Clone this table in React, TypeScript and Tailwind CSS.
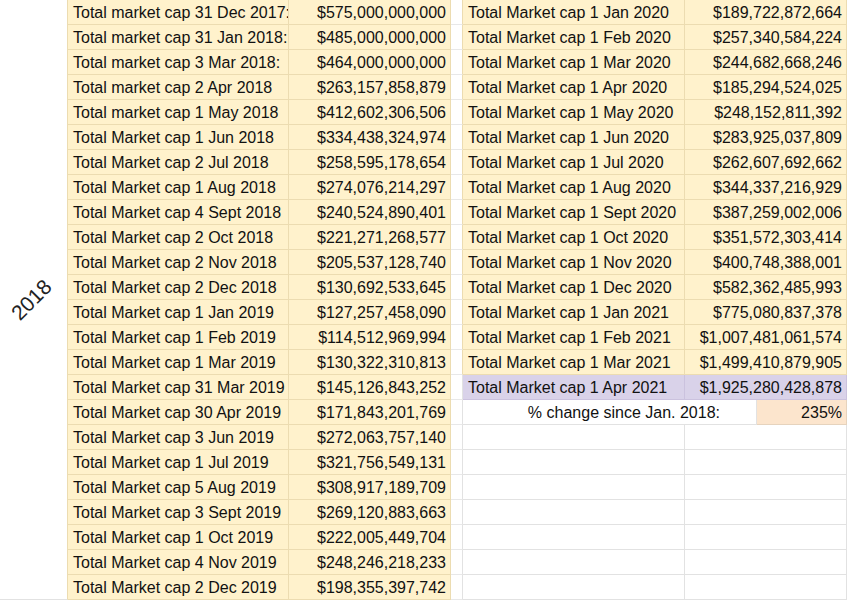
import clsx from "clsx";

const left: [string, string][] = [
  ["Total market cap 31 Dec 2017:", "$575,000,000,000"],
  ["Total market cap 31 Jan 2018:", "$485,000,000,000"],
  ["Total market cap 3 Mar 2018:", "$464,000,000,000"],
  ["Total market cap 2 Apr 2018", "$263,157,858,879"],
  ["Total market cap 1 May 2018", "$412,602,306,506"],
  ["Total Market cap 1 Jun 2018", "$334,438,324,974"],
  ["Total Market cap 2 Jul 2018", "$258,595,178,654"],
  ["Total Market cap 1 Aug 2018", "$274,076,214,297"],
  ["Total Market cap 4 Sept 2018", "$240,524,890,401"],
  ["Total Market cap 2 Oct 2018", "$221,271,268,577"],
  ["Total Market cap 2 Nov 2018", "$205,537,128,740"],
  ["Total Market cap 2 Dec 2018", "$130,692,533,645"],
  ["Total Market cap 1 Jan 2019", "$127,257,458,090"],
  ["Total Market cap 1 Feb 2019", "$114,512,969,994"],
  ["Total Market cap 1 Mar 2019", "$130,322,310,813"],
  ["Total Market cap 31 Mar 2019", "$145,126,843,252"],
  ["Total Market cap 30 Apr 2019", "$171,843,201,769"],
  ["Total Market cap 3 Jun 2019", "$272,063,757,140"],
  ["Total Market cap 1 Jul 2019", "$321,756,549,131"],
  ["Total Market cap 5 Aug 2019", "$308,917,189,709"],
  ["Total Market cap 3 Sept 2019", "$269,120,883,663"],
  ["Total Market cap 1 Oct 2019", "$222,005,449,704"],
  ["Total Market cap 4 Nov 2019", "$248,246,218,233"],
  ["Total Market cap 2 Dec 2019", "$198,355,397,742"],
];

const right: [string, string][] = [
  ["Total Market cap 1 Jan 2020", "$189,722,872,664"],
  ["Total Market cap 1 Feb 2020", "$257,340,584,224"],
  ["Total Market cap 1 Mar 2020", "$244,682,668,246"],
  ["Total Market cap 1 Apr 2020", "$185,294,524,025"],
  ["Total Market cap 1 May 2020", "$248,152,811,392"],
  ["Total Market cap 1 Jun 2020", "$283,925,037,809"],
  ["Total Market cap 1 Jul 2020", "$262,607,692,662"],
  ["Total Market cap 1 Aug 2020", "$344,337,216,929"],
  ["Total Market cap 1 Sept 2020", "$387,259,002,006"],
  ["Total Market cap 1 Oct 2020", "$351,572,303,414"],
  ["Total Market cap 1 Nov 2020", "$400,748,388,001"],
  ["Total Market cap 1 Dec 2020", "$582,362,485,993"],
  ["Total Market cap 1 Jan 2021", "$775,080,837,378"],
  ["Total Market cap 1 Feb 2021", "$1,007,481,061,574"],
  ["Total Market cap 1 Mar 2021", "$1,499,410,879,905"],
  ["Total Market cap 1 Apr 2021", "$1,925,280,428,878"],
];

function Cell({
  children,
  className,
}: {
  children?: React.ReactNode;
  className?: string;
}) {
  return (
    <div
      className={clsx(
        "flex h-[25px] items-center overflow-hidden whitespace-nowrap border-b border-r pt-px",
        className,
      )}
    >
      {children}
    </div>
  );
}

const yellow = "bg-[#fff2cc] border-[#ecdcb1]";
const purple = "bg-[#d9d2e9] border-[#cbc2de]";
const plain = "bg-white border-[#e2e2e2]";

export default function App() {
  return (
    <div
      className="flex w-[847px] bg-white text-[16px] text-[#111]"
      style={{ fontFamily: '"Liberation Sans", Arial, sans-serif' }}
    >
      {/* merged year cell */}
      <div className="flex h-[600px] w-[68px] shrink-0 items-center justify-center border-b border-r border-b-[#e2e2e2] border-r-[#ecdcb1]">
        <span className="-translate-x-[2px] -rotate-45 text-[21px] text-[#222]">2018</span>
      </div>

      <div className="grid grid-cols-[221px_162px_12px_222px_162px]">
        {left.map(([label, value], i) => {
          const r = right[i];
          return (
            <div key={i} className="contents">
              <Cell className={clsx(yellow, "pl-[5px]")}>{label}</Cell>
              <Cell className={clsx(yellow, "justify-end pr-[4px]")}>{value}</Cell>
              <Cell
                className={clsx(
                  "border-b-[#e8e8e8] bg-white",
                  i < 15 ? "border-r-[#ecdcb1]" : "border-r-[#e2e2e2]",
                )}
              />
              {r && i < 15 && (
                <>
                  <Cell className={clsx(yellow, "pl-[5px]")}>{r[0]}</Cell>
                  <Cell className={clsx(yellow, "justify-end pr-[4px]")}>{r[1]}</Cell>
                </>
              )}
              {r && i === 15 && (
                <>
                  <Cell className={clsx(purple, "pl-[5px]")}>{r[0]}</Cell>
                  <Cell className={clsx(purple, "justify-end pr-[4px]")}>{r[1]}</Cell>
                </>
              )}
              {i === 16 && (
                <div className="col-span-2 flex h-[25px]">
                  <Cell className={clsx(plain, "w-[294px] justify-end pr-[36px]")}>
                    % change since Jan. 2018:
                  </Cell>
                  <Cell className="flex-1 justify-end border-[#e6d3bd] bg-[#fce5cd] pr-[4px]">
                    235%
                  </Cell>
                </div>
              )}
              {i > 16 && (
                <>
                  <Cell className={plain} />
                  <Cell className={plain} />
                </>
              )}
            </div>
          );
        })}
      </div>
    </div>
  );
}
